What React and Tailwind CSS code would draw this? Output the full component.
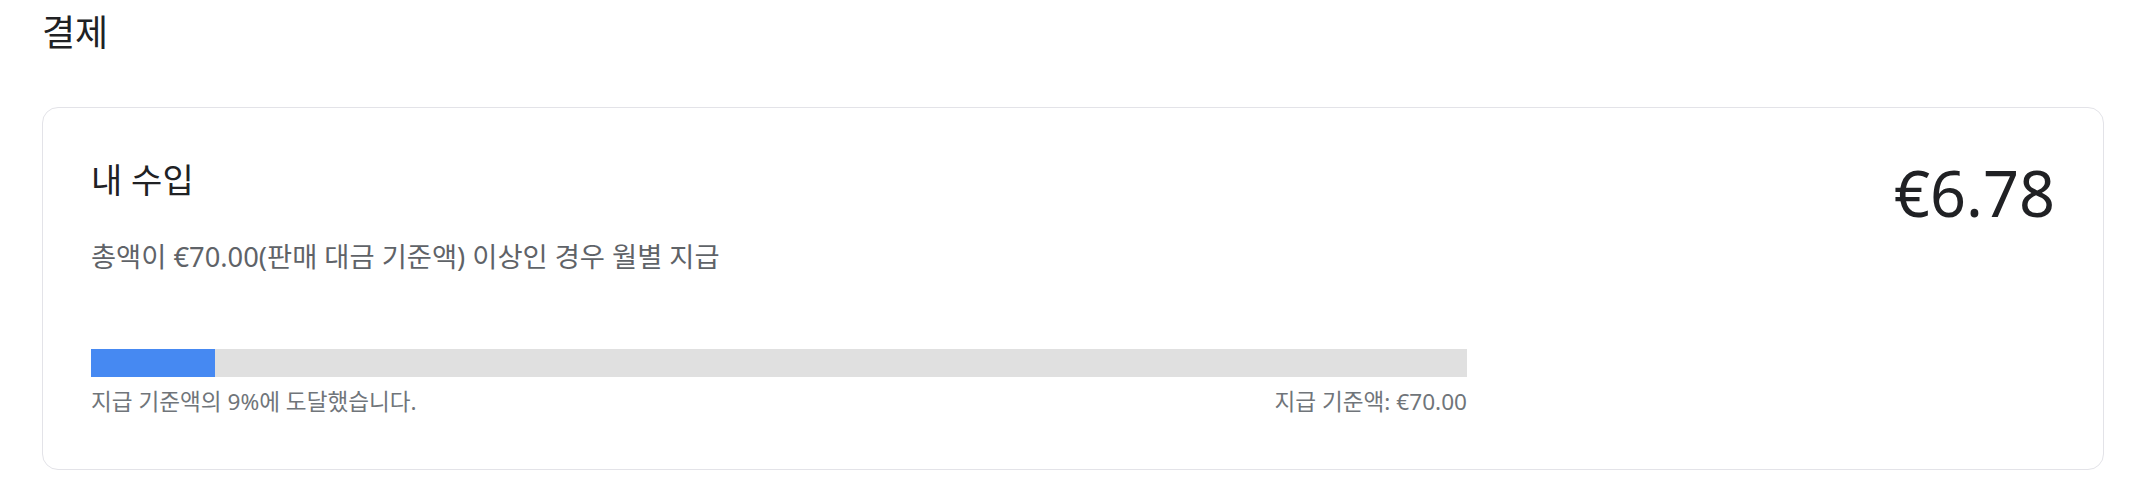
import React from 'react';

const earnings = {
    amount: '€6.78',
    threshold: '€70.00',
    percent: 9,
};

export default function App() {
    return (
        <div className="min-h-screen bg-white pl-[42px] pr-[44px] pt-[13px] font-['Noto_Sans','Noto_Sans_CJK_KR',sans-serif]">
            <h1 className="text-[36px] leading-[40px] text-[#202124]">결제</h1>

            <div className="mt-[54px] flex justify-between rounded-2xl border border-[#e3e3e8] bg-white pt-12 pb-[53px] pl-12 pr-12">
                <div className="flex w-[1376px] flex-col">
                    <h2 className="text-[34px] leading-[48px] text-[#202124]">내 수입</h2>
                    <p className="mt-[35px] text-[27.3px] leading-[36px] text-[#5f6368]">
                        총액이 {earnings.threshold}(판매 대금 기준액) 이상인 경우 월별 지급
                    </p>

                    <div className="mt-[74px] h-[28px] w-full bg-[#e0e0e0]">
                        <div className="h-full bg-[#4689f2]" style={{ width: `${earnings.percent}%` }} />
                    </div>
                    <div className="mt-[11px] flex justify-between text-[22.6px] leading-[28px] text-[#70757a]">
                        <span>지급 기준액의 {earnings.percent}%에 도달했습니다.</span>
                        <span>지급 기준액: {earnings.threshold}</span>
                    </div>
                </div>

                <div className="mt-[5px] text-[63px] leading-none text-[#202124]">{earnings.amount}</div>
            </div>
        </div>
    );
}
